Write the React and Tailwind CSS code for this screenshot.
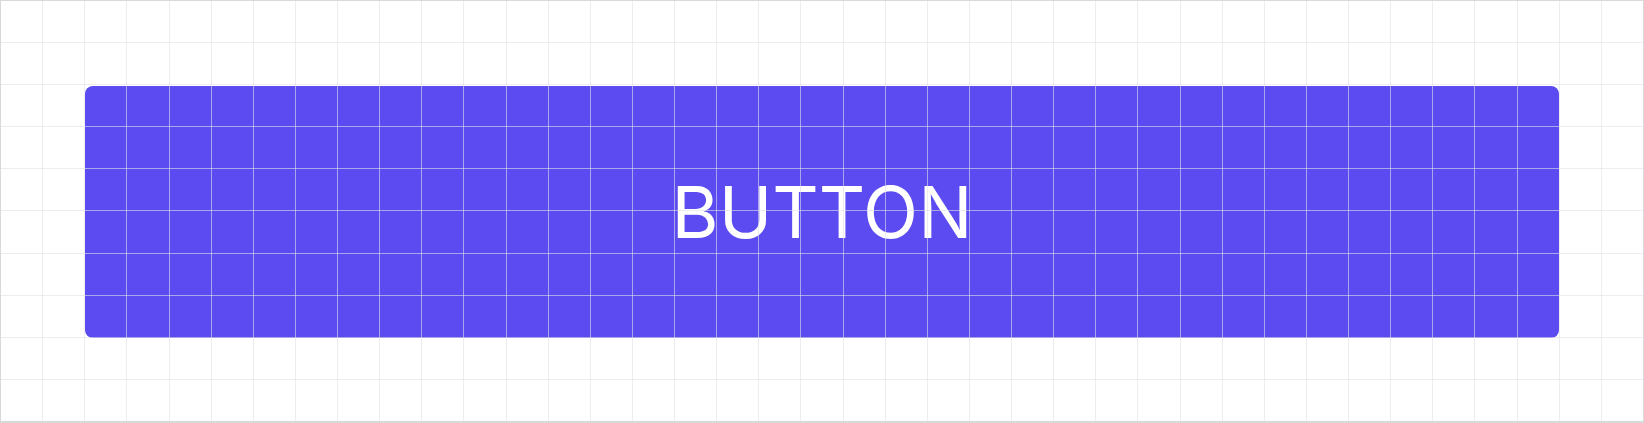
import React from 'react';

const COLS = 39;
const ROWS = 10;

function GridOverlay() {
    return (
        <div className="pointer-events-none absolute inset-0">
            <div className="absolute inset-0 flex">
                {Array.from({ length: COLS }).map((_, i) => (
                    <div key={i} className={`flex-1 ${i > 0 ? 'border-l border-[rgba(225,225,230,0.6)]' : ''}`} />
                ))}
            </div>
            <div className="absolute inset-0 flex flex-col">
                {Array.from({ length: ROWS }).map((_, i) => (
                    <div key={i} className={`flex-1 ${i > 0 ? 'border-t border-[rgba(225,225,230,0.6)]' : ''}`} />
                ))}
            </div>
        </div>
    );
}

export default function App() {
    return (
        <div className="w-[1644px] h-[423px] bg-white border border-b-2 border-[#d9d9d9] box-border">
            <div className="relative w-full h-full px-[84px] pt-[85px] pb-[83px]">
                <button className="w-full h-full rounded-lg bg-[#5b4bf0] text-white text-[72px] font-normal tracking-normal leading-none font-['Inter',sans-serif] flex items-center justify-center">
                    BUTTON
                </button>
                <GridOverlay />
            </div>
        </div>
    );
}
